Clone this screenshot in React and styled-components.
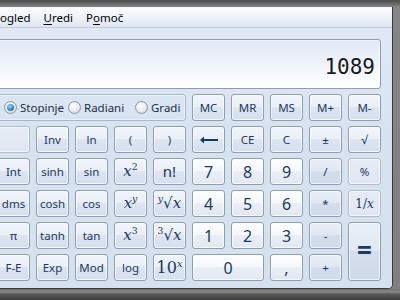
import React from "react";
import styled, { createGlobalStyle, css } from "styled-components";

const Global = createGlobalStyle`
  html, body { margin: 0; padding: 0; }
  body {
    width: 400px; height: 300px; overflow: hidden;
    background: #7c7c7c;
    font-family: "Noto Sans", "Open Sans", sans-serif;
  }
`;

const Screen = styled.div`
  width: 400px;
  height: 300px;
  overflow: hidden;
  display: flex;
  flex-direction: column;
  background: linear-gradient(#4c4c4c 0px, #6a6a6a 4px, #858585 7px, #7f7f7f 100%);
`;

const TopStrip = styled.div`
  flex: 0 0 7px;
`;

const FrameRow = styled.div`
  display: flex;
  flex: 0 0 auto;
`;

const BottomFrame = styled.div`
  flex: 1 1 auto;
  background: linear-gradient(#6f6f6f, #8a8a8a 3px, #5a5a5a 5px, #3e3e3e 100%);
`;

const Window = styled.div`
  flex: 0 0 392px;
  display: flex;
  flex-direction: column;
  border-right: 1px solid #3a3a3a;
  border-bottom: 1px solid #3a3a3a;
  border-bottom-right-radius: 5px;
  overflow: hidden;
  background: #d8e3f1;
`;

const MenuBar = styled.div`
  height: 19px;
  display: flex;
  align-items: center;
  gap: 13px;
  border-top: 1px solid #f4f6f9;
  border-bottom: 1px solid #c3cedd;
  background: linear-gradient(#fbfcfe, #eef2f9 50%, #dfe6f1);
  font-size: 11.5px;
  color: #000;
`;

const MenuItem = styled.span`
  margin-left: ${(p) => p.$offset || 0}px;
  line-height: 19px;
  white-space: nowrap;
  u { text-decoration: underline; text-underline-offset: 2px; }
`;

const Body = styled.div`
  padding: 11px 11px 7px 0;
  background: linear-gradient(#e0e9f5, #d8e3f1 40%, #d6e1ef);
`;

const Inner = styled.div`
  margin-left: -3px;
  width: 384px;
  display: flex;
  flex-direction: column;
  gap: 5px;
`;

const Display = styled.div`
  box-sizing: border-box;
  height: 50px;
  border: 1px solid #8f9cb1;
  border-radius: 3px;
  background: linear-gradient(#e0e9f6, #eef3fa 45%, #fbfcfe 85%, #ffffff);
  box-shadow: inset 0 0 0 1px rgba(255, 255, 255, 0.5);
  display: flex;
  align-items: flex-end;
  justify-content: flex-end;
  padding: 0 5px 8px 0;
`;

const Readout = styled.span`
  font-family: "DejaVu Sans Mono", "Liberation Mono", monospace;
  font-size: 21px;
  line-height: 26px;
  color: #1a1a1a;
`;

const Keys = styled.div`
  display: grid;
  grid-template-columns: repeat(10, 33px);
  grid-auto-rows: 27px;
  column-gap: 6px;
  row-gap: 5px;
`;

const RadioGroup = styled.div`
  grid-column: span 5;
  border: 1px solid #a9b7cb;
  border-radius: 3px;
  box-shadow: inset 0 0 0 1px rgba(255, 255, 255, 0.45);
  display: flex;
  align-items: center;
  padding-left: 6px;
  font-size: 11.5px;
  color: #1e2f45;
`;

const RadioItem = styled.label`
  flex: 0 0 ${(p) => p.$w}px;
  display: flex;
  align-items: center;
  gap: 3px;
  white-space: nowrap;
`;

const RadioDot = styled.span`
  flex: 0 0 auto;
  width: 11px;
  height: 11px;
  border-radius: 50%;
  border: 1px solid #8d96a2;
  background: radial-gradient(circle at 40% 35%, #ffffff, #e4e8ee 60%, #c9d0da);
  position: relative;
  ${(p) =>
    p.$on &&
    css`
      &::after {
        content: "";
        position: absolute;
        left: 2px;
        top: 2px;
        width: 7px;
        height: 7px;
        border-radius: 50%;
        background: radial-gradient(circle at 40% 35%, #9fe0ff, #2a8ad6 55%, #0f4f9a);
      }
    `}
`;

const variants = {
  fn: css`
    background: linear-gradient(#f2f6fb 0%, #e9eff7 48%, #dce5f1 50%, #d5dfee 100%);
  `,
  num: css`
    background: linear-gradient(#fdfeff 0%, #f5f8fc 48%, #e9eef6 50%, #e3e9f3 100%);
    font-size: 16px;
  `,
  op: css`
    background: linear-gradient(#e9eff7 0%, #e1e8f3 48%, #d4deec 50%, #cfdaea 100%);
  `,
  flat: css`
    border-color: #b0bccd;
    background: linear-gradient(#e6ecf5, #dfe6f1);
  `,
};

const Key = styled.button`
  grid-column: span ${(p) => p.$cols || 1};
  grid-row: span ${(p) => p.$rows || 1};
  margin: 0;
  padding: 0;
  border: 1px solid #8f9db2;
  border-radius: 3px;
  box-shadow: inset 0 0 0 1px rgba(255, 255, 255, 0.7);
  font-family: "Noto Sans", "Open Sans", sans-serif;
  font-size: ${(p) => p.$fs || 11.5}px;
  color: #1e395b;
  display: flex;
  align-items: center;
  justify-content: center;
  line-height: 1;
  ${(p) => variants[p.$v || "fn"]}
`;

const MathLabel = styled.span`
  font-family: "DejaVu Serif", "Liberation Serif", serif;
  font-style: italic;
  font-size: ${(p) => p.$size || 15}px;
  color: #1e395b;
  white-space: nowrap;
  sup {
    font-size: 0.62em;
    vertical-align: 0.6em;
    line-height: 0;
  }
`;

const Upright = styled.span`
  font-style: normal;
`;

const Equals = styled.span`
  font-size: 26px;
  font-weight: 700;
  color: #1e395b;
  line-height: 1;
  margin-top: -3px;
`;

const Arrow = () => (
  <svg width="20" height="8" viewBox="0 0 20 8">
    <path d="M1 4 L5 0.5 L5 3 L19 3 L19 5 L5 5 L5 7.5 Z" fill="#1e395b" />
  </svg>
);

export default function App() {
  return (
    <>
      <Global />
      <Screen>
        <TopStrip />
        <FrameRow>
          <Window>
            <MenuBar>
              <MenuItem $offset={-7}>
                <u>P</u>ogled
              </MenuItem>
              <MenuItem>
                <u>U</u>redi
              </MenuItem>
              <MenuItem>
                P<u>o</u>moč
              </MenuItem>
            </MenuBar>
            <Body>
              <Inner>
                <Display>
                  <Readout>1089</Readout>
                </Display>
                <Keys>
                  <RadioGroup>
                    <RadioItem $w={64}>
                      <RadioDot $on />
                      Stopinje
                    </RadioItem>
                    <RadioItem $w={67}>
                      <RadioDot />
                      Radiani
                    </RadioItem>
                    <RadioItem $w={50}>
                      <RadioDot />
                      Gradi
                    </RadioItem>
                  </RadioGroup>
                  <Key>MC</Key>
                  <Key>MR</Key>
                  <Key>MS</Key>
                  <Key>M+</Key>
                  <Key>M-</Key>

                  <Key $v="flat" aria-label="blank" />
                  <Key>Inv</Key>
                  <Key>ln</Key>
                  <Key>(</Key>
                  <Key>)</Key>
                  <Key aria-label="backspace">
                    <Arrow />
                  </Key>
                  <Key>CE</Key>
                  <Key>C</Key>
                  <Key>±</Key>
                  <Key>√</Key>

                  <Key>Int</Key>
                  <Key>sinh</Key>
                  <Key>sin</Key>
                  <Key>
                    <MathLabel>
                      x<sup><Upright>2</Upright></sup>
                    </MathLabel>
                  </Key>
                  <Key $fs={15}>n!</Key>
                  <Key $v="num">7</Key>
                  <Key $v="num">8</Key>
                  <Key $v="num">9</Key>
                  <Key $v="op">/</Key>
                  <Key $v="flat">%</Key>

                  <Key>dms</Key>
                  <Key>cosh</Key>
                  <Key>cos</Key>
                  <Key>
                    <MathLabel>
                      x<sup>y</sup>
                    </MathLabel>
                  </Key>
                  <Key>
                    <MathLabel>
                      <sup>y</sup>
                      <Upright>√</Upright>x
                    </MathLabel>
                  </Key>
                  <Key $v="num">4</Key>
                  <Key $v="num">5</Key>
                  <Key $v="num">6</Key>
                  <Key $v="op">*</Key>
                  <Key $v="flat">
                    <MathLabel $size={12}>
                      <Upright>1/</Upright>x
                    </MathLabel>
                  </Key>

                  <Key>π</Key>
                  <Key>tanh</Key>
                  <Key>tan</Key>
                  <Key>
                    <MathLabel>
                      x<sup><Upright>3</Upright></sup>
                    </MathLabel>
                  </Key>
                  <Key>
                    <MathLabel>
                      <sup><Upright>3</Upright></sup>
                      <Upright>√</Upright>x
                    </MathLabel>
                  </Key>
                  <Key $v="num">1</Key>
                  <Key $v="num">2</Key>
                  <Key $v="num">3</Key>
                  <Key $v="op">-</Key>
                  <Key $v="op" $rows={2}>
                    <Equals>=</Equals>
                  </Key>

                  <Key>F-E</Key>
                  <Key>Exp</Key>
                  <Key>Mod</Key>
                  <Key>log</Key>
                  <Key>
                    <MathLabel $size={16}>
                      <Upright>10</Upright>
                      <sup>x</sup>
                    </MathLabel>
                  </Key>
                  <Key $v="num" $cols={2}>0</Key>
                  <Key $v="num">,</Key>
                  <Key $v="op">+</Key>
                </Keys>
              </Inner>
            </Body>
          </Window>
        </FrameRow>
        <BottomFrame />
      </Screen>
    </>
  );
}
